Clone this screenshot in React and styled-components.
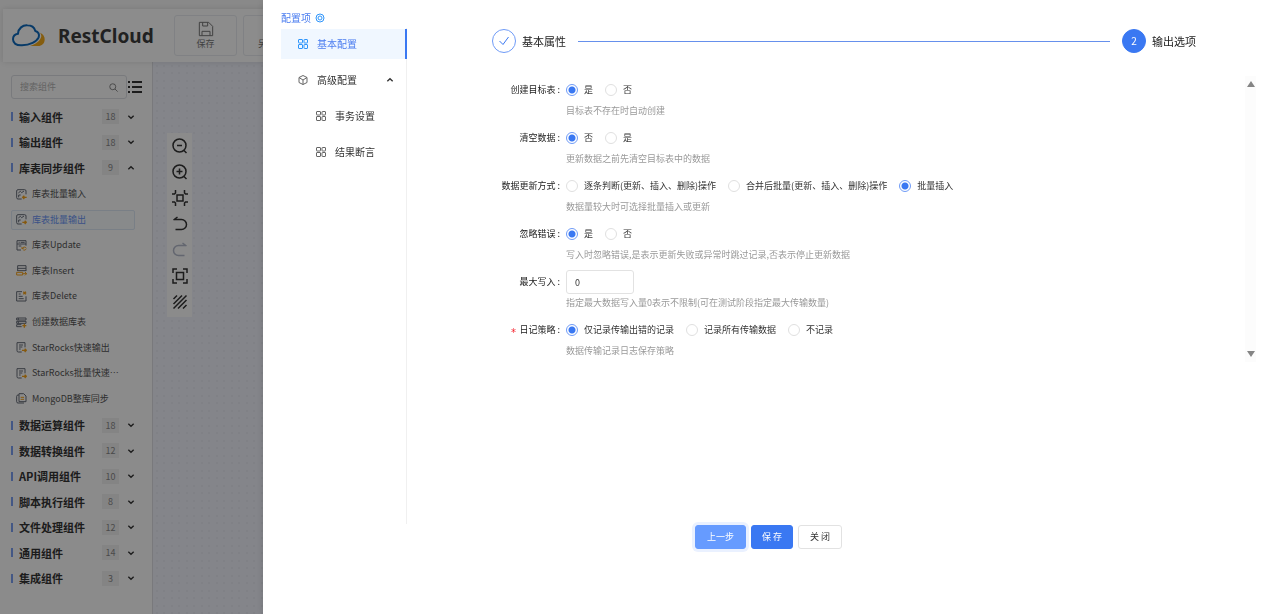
import React, { useState } from "react";
import styled, { createGlobalStyle, css } from "styled-components";

const blue = "#3a78f2";
const ink = "#333";

const GlobalStyle = createGlobalStyle`
  *, *::before, *::after { box-sizing: border-box; }
  body {
    margin: 0;
    background: #fafafa;
    color: ${ink};
    font-family: "Noto Sans CJK SC", "Noto Sans", sans-serif;
    font-size: 9px;
    line-height: 16px;
  }
  button, input { font: inherit; color: inherit; }
  ul { list-style: none; margin: 0; padding: 0; }
`;

/* ---------- page behind the drawer ---------- */

const Page = styled.div`
  display: flex;
  flex-direction: column;
  min-height: 100vh;
  overflow: hidden;
`;

const Header = styled.header`
  display: flex;
  align-items: center;
  gap: 6px;
  height: 53px;
  margin: 9px 3px 0;
  padding-left: 9px;
  background: #fff;
  box-shadow: 0 0 6px rgba(0, 0, 0, 0.12);
  z-index: 1;
`;

const Brand = styled.div`
  display: flex;
  align-items: center;
  gap: 12px;
  width: 156px;
  color: #3c3c3c;
  font: 700 19px/24px "Noto Sans", sans-serif;
`;

const HeaderButton = styled.button`
  display: flex;
  flex-direction: column;
  align-items: center;
  justify-content: center;
  min-width: 63px;
  height: 41px;
  padding: 0 14px;
  border: 1px solid #e9ebf1;
  border-radius: 3px;
  background: #fff;
  color: #777;
  line-height: 13px;
`;

const Workspace = styled.div`
  display: flex;
  flex: 1;
`;

const Sidebar = styled.aside`
  display: flex;
  flex-direction: column;
  width: 153px;
  padding: 13px 17px 23px 11px;
  border-right: 1px solid #dcdde2;
  background: #fdfdfd;
`;

const SearchRow = styled.div`
  display: flex;
  align-items: center;
  width: 132px;
  height: 24px;
  margin-bottom: 5px;
`;

const SearchBox = styled.label`
  display: flex;
  align-items: center;
  width: 116px;
  height: 24px;
  padding: 0 8px;
  border: 1px solid #dcdee4;
  border-radius: 3px;
  color: #666;
`;

const SearchInput = styled.input`
  flex: 1;
  min-width: 0;
  padding: 0;
  border: 0;
  outline: 0;
  background: transparent;
  &::placeholder { color: #b4b4b4; opacity: 1; }
`;

const IconButton = styled.button`
  display: flex;
  align-items: center;
  justify-content: center;
  padding: 0;
  border: 0;
  background: transparent;
  color: ${(p) => (p.$faded ? "#b4bacb" : ink)};
`;

const Tree = styled.ul`
  display: flex;
  flex: 1;
  flex-direction: column;
`;

const Group = styled.li`
  display: flex;
  flex: 1 0 auto;
  flex-direction: column;
`;

const GroupHead = styled.button`
  display: flex;
  flex: 1 0 25px;
  align-items: center;
  padding: 0;
  border: 0;
  background: transparent;
  color: ${ink};
  font-weight: 700;
  text-align: left;
  &::before {
    content: "";
    width: 2px;
    height: 9px;
    margin-right: 6px;
    background: #7b9ef2;
  }
`;

const GroupName = styled.span`
  flex: 1;
  font-size: 11px;
`;

const Count = styled.span`
  width: 17px;
  margin-right: 8px;
  background: #f1f1f1;
  color: #888;
  font-weight: 400;
  line-height: 15px;
  text-align: center;
`;

const ItemList = styled.ul`
  display: grid;
  grid-auto-rows: 1fr;
  align-items: center;
  height: 232px;
  padding: 1px 0;
`;

const Item = styled.li`
  display: flex;
  align-items: center;
  gap: 5px;
  height: 20px;
  padding-left: 4px;
  border: 1px solid ${(p) => (p.$active ? "#dce8f5" : "transparent")};
  border-radius: 2px;
  background: ${(p) => (p.$active ? "#f8fbfe" : "transparent")};
  color: ${(p) => (p.$active ? "#6b96f5" : "#555")};
  white-space: nowrap;
`;

const Canvas = styled.main`
  flex: 1;
  padding: 71px 14px;
  background-color: #f0f2fb;
  background-image:
    radial-gradient(circle at 4px 4px, #e9ebf4 1px, transparent 1px),
    radial-gradient(circle at 11px 4px, #e9ebf4 1px, transparent 1px),
    radial-gradient(circle at 4px 11px, #e9ebf4 1px, transparent 1px),
    radial-gradient(circle at 11px 11px, #e9ebf4 1px, transparent 1px);
  background-size: 15px 15px;
`;

const CanvasTools = styled.div`
  display: grid;
  grid-auto-rows: 26px;
  width: 25px;
  padding: 0 0 2px;
  background: #fdfdfd;
`;

/* ---------- drawer ---------- */

const Mask = styled.div`
  position: fixed;
  inset: 0;
  z-index: 10;
  background: rgba(0, 0, 0, 0.45);
`;

const Drawer = styled.section`
  position: fixed;
  inset: 0 0 0 263px;
  z-index: 11;
  display: flex;
  flex-direction: column;
  padding: 0 10px 0 18px;
  background: #fff;
  box-shadow: -2px 0 6px rgba(0, 0, 0, 0.08);
`;

const DrawerTitle = styled.h1`
  display: flex;
  align-items: center;
  gap: 4px;
  height: 28px;
  margin: 0;
  padding-top: 8px;
  color: #4b7df0;
  font-size: 10px;
  font-weight: 400;
`;

const DrawerBody = styled.div`
  display: flex;
  flex: 1;
  min-height: 0;
`;

const Menu = styled.nav`
  display: flex;
  flex-direction: column;
  gap: 6px;
  width: 126px;
  padding-top: 1px;
  border-right: 1px solid #f0f0f0;
`;

const MenuItem = styled.a`
  display: flex;
  align-items: center;
  gap: 9px;
  height: 30px;
  margin-right: -1px;
  padding: 0 11px 0 ${(p) => (p.$nested ? 35 : 17)}px;
  border-right: 2px solid ${(p) => (p.$active ? blue : "transparent")};
  background: ${(p) => (p.$active ? "#f0f7ff" : "transparent")};
  color: ${(p) => (p.$active ? "#4b7df0" : ink)};
  font-size: 10px;
  text-decoration: none;
  > span { flex: 1; }
  > svg:first-child { color: ${(p) => (p.$active ? "#2f95fb" : "#666")}; }
`;

const Content = styled.div`
  display: flex;
  flex: 1;
  flex-direction: column;
  min-width: 0;
`;

const Steps = styled.ol`
  display: flex;
  align-items: center;
  gap: 12px;
  margin: 1px 60px 23px 85px;
  padding: 0;
  list-style: none;
`;

const Step = styled.li`
  display: flex;
  align-items: center;
  gap: 6px;
  font-size: 11px;
  color: #222;
`;

const StepMark = styled.span`
  display: flex;
  align-items: center;
  justify-content: center;
  width: 24px;
  height: 24px;
  border: 1px solid ${(p) => (p.$current ? blue : "#6f9bf7")};
  border-radius: 50%;
  background: ${(p) => (p.$current ? blue : "#fff")};
  color: ${(p) => (p.$current ? "#fff" : blue)};
  font-size: 10px;
`;

const StepLine = styled.li`
  flex: 1;
  height: 1px;
  background: #6690ec;
`;

const FormScroll = styled.div`
  display: flex;
  height: 286px;
`;

const Form = styled.form`
  display: grid;
  grid-auto-rows: 48px;
  flex: 1;
  align-content: start;
`;

const ScrollTrack = styled.div`
  display: flex;
  flex-direction: column;
  align-items: center;
  justify-content: space-between;
  width: 11px;
  padding: 5px 0;
  background: #fcfcfc;
  color: #858585;
`;

const Field = styled.div`
  display: grid;
  grid-template-columns: 159px 1fr;
  grid-template-rows: 28px 14px;
`;

const FieldLabel = styled.label`
  align-self: center;
  padding-right: 6px;
  color: #222;
  text-align: right;
  &::after { content: ":"; margin-left: 2px; }
  ${(p) =>
    p.$required &&
    css`
      &::before {
        content: "*";
        margin-right: 3px;
        color: #f5222d;
        font: 10px/1 "DejaVu Sans Mono", monospace;
        vertical-align: bottom;
      }
    `}
`;

const Control = styled.div`
  display: flex;
  align-items: center;
  gap: 12px;
`;

const Hint = styled.div`
  grid-column: 2;
  color: #999;
  line-height: 14px;
`;

const RadioLabel = styled.label`
  display: flex;
  align-items: center;
  gap: 6px;
  white-space: nowrap;
`;

const Radio = styled.input`
  appearance: none;
  width: 12px;
  height: 12px;
  margin: 0;
  border: 1px solid #e0e0e0;
  border-radius: 50%;
  background: #fff;
  &:checked {
    border-color: #6f9bf7;
    background: radial-gradient(circle, ${blue} 3px, #fff 4px);
  }
`;

const NumberInput = styled.input`
  width: 68px;
  height: 24px;
  padding: 0 8px;
  border: 1px solid #e2e2e2;
  border-radius: 3px;
`;

const Footer = styled.footer`
  display: flex;
  justify-content: center;
  gap: 5px;
  height: 90px;
  padding-top: 1px;
`;

const variants = {
  previous: css`
    border-color: #669bff;
    background: #669bff;
    color: #fff;
    box-shadow: 0 0 0 3px #eaf1ff;
  `,
  primary: css`
    padding: 0 10px;
    border-color: ${blue};
    background: ${blue};
    color: #fff;
  `,
  plain: css`
    border-color: #e2e2e2;
    background: #fff;
  `,
};

const Button = styled.button`
  height: 24px;
  padding: 0 11px;
  border: 1px solid;
  border-radius: 3px;
  ${(p) => variants[p.$variant]}
`;

/* ---------- icons ---------- */

function Icon({ size = 12, box = 24, width = 2, children }) {
  return (
    <svg
      width={size}
      height={size}
      viewBox={`0 0 ${box} ${box}`}
      fill="none"
      stroke="currentColor"
      strokeWidth={width}
      aria-hidden="true"
    >
      {children}
    </svg>
  );
}

const Chevron = ({ up }) => (
  <Icon size={8} width={4}>
    <path d={up ? "M4 16l8-8 8 8" : "M4 8l8 8 8-8"} />
  </Icon>
);

const GridIcon = () => (
  <Icon size={10} box={20} width={2}>
    <rect x="1" y="1" width="8" height="7" rx="1" />
    <rect x="12" y="1" width="7" height="7" rx="1" />
    <rect x="1" y="11" width="8" height="8" rx="1" />
    <rect x="12" y="11" width="7" height="8" rx="1" />
  </Icon>
);

const CubeIcon = () => (
  <Icon size={10} box={20} width={2}>
    <path d="M10 1l8 4v10l-8 4-8-4V5z M2 5l8 5 8-5 M10 10v9" />
  </Icon>
);

const Logo = () => (
  <svg width="34" height="23" viewBox="0 0 102 69" aria-hidden="true">
    <path
      fill="#f2a91c"
      d="M84 26C94 30 99 38 98 48C97 59 90 66 78 66H54C72 61 86 49 88 37C88 33 86 29 84 26z"
    />
    <path
      fill="none"
      stroke="#0f6bbd"
      strokeWidth="6"
      d="M30 64C12 65 3 57 3 46C3 36 10 30 18 29C19 13 32 3 46 4C59 4 67 11 70 21C79 23 83 31 80 40C74 53 54 63 30 64z"
    />
  </svg>
);

const SaveIcon = () => (
  <Icon size={16} box={48} width={3}>
    <path d="M4 4h28l12 12v28H4z M14 4v11h15V4 M12 44V31h24v13" />
  </Icon>
);

const accent = "#f5a21b";

const itemIcons = {
  input: (
    <>
      <path d="M17 30H6a4 4 0 0 1-4-4V6a4 4 0 0 1 4-4h20a4 4 0 0 1 4 4v10 M7 12l6-5 4 4 7-5 M8 18v7 M8 18h6" />
      <path stroke={accent} strokeWidth="4" d="M32 25H20 M25 20l-5 5 5 5" />
    </>
  ),
  output: (
    <>
      <path d="M17 30H6a4 4 0 0 1-4-4V6a4 4 0 0 1 4-4h20a4 4 0 0 1 4 4v10 M7 12l6-5 4 4 7-5 M8 18v7 M8 18h6" />
      <path stroke={accent} strokeWidth="4" d="M19 25h12 M26 20l5 5-5 5" />
    </>
  ),
  update: (
    <>
      <path d="M15 30H3V2h27v15 M3 12h27 M8 7h3 M14 7h12 M8 18h8" />
      <path stroke={accent} d="M31 25c-2-4-7-5-10-2l-3 3 M18 21v5h5 M22 30c3 1 7 0 8-3" />
    </>
  ),
  insert: (
    <>
      <path d="M5 18V2h25v16 M5 10h25 M5 17h25" />
      <path stroke={accent} d="M2 22h18v8H2z M21 26h11 M27 21l5 5-5 5" />
    </>
  ),
  remove: (
    <>
      <path d="M18 2H2v28h28V16 M8 9h6 M8 16h12 M8 23h15" />
      <path stroke={accent} strokeWidth="4" d="M22 2l8 8 M30 2l-8 8" />
    </>
  ),
  create: (
    <>
      <path d="M2 3h28v6H2z M2 13h28v6H2z M17 29H2v-6h14 M7 3v6 M7 13v6" />
      <path stroke={accent} strokeWidth="4" d="M25 20v12 M19 26h12" />
    </>
  ),
  fast: (
    <>
      <path d="M17 30H7a4 4 0 0 1-4-4V2h24v14 M9 9h12 M9 15h10 M9 21h5" />
      <path stroke={accent} strokeWidth="4" d="M18 25h13 M26 20l5 5-5 5" />
    </>
  ),
  mongo: (
    <>
      <path d="M9 2h14l7 7v17H9z M9 6H6a4 4 0 0 0-4 4v16a4 4 0 0 0 4 4h18" />
      <path stroke={accent} d="M14 13h10 M14 19h10" />
    </>
  ),
};

const toolIcons = [
  ["缩小", <><circle cx="15" cy="15" r="13" /><path d="M10 15h10 M24 25l5 5" /></>],
  ["放大", <><circle cx="15" cy="15" r="13" /><path d="M9 15h12 M15 9v12 M24 25l5 5" /></>],
  ["适应画布", <path d="M10 10h12v12H10z M0 8h5l2-2V0 M25 0v6l2 2h5 M0 24h5l2 2v6 M25 32v-6l2-2h5" />],
  ["撤销", <path d="M4 7h15a10 10 0 0 1 0 20H7 M3 8l8-6" />],
  ["重做", <path d="M28 7H13a10 10 0 0 0 0 20h12 M29 8l-8-6" />],
  ["全屏", <path d="M9 9h14v14H9z M2 10V2h8 M22 2h8v8 M30 22v8h-8 M10 30H2v-8" />],
  ["网格", <path d="M3 10l7-7 M3 20L20 3 M3 29L29 3 M12 29l17-17 M22 29l7-7" />],
];

/* ---------- data ---------- */

const items = [
  ["库表批量输入", "input"],
  ["库表批量输出", "output"],
  ["库表Update", "update"],
  ["库表Insert", "insert"],
  ["库表Delete", "remove"],
  ["创建数据库表", "create"],
  ["StarRocks快速输出", "fast"],
  ["StarRocks批量快速⋯", "fast"],
  ["MongoDB整库同步", "mongo"],
];

const groups = [
  ["输入组件", 18],
  ["输出组件", 18],
  ["库表同步组件", 9, items],
  ["数据运算组件", 18],
  ["数据转换组件", 12],
  ["API调用组件", 10],
  ["脚本执行组件", 8],
  ["文件处理组件", 12],
  ["通用组件", 14],
  ["集成组件", 3],
];

const fields = [
  { id: "create", label: "创建目标表", options: ["是", "否"], value: "是", hint: "目标表不存在时自动创建" },
  { id: "clear", label: "清空数据", options: ["否", "是"], value: "否", hint: "更新数据之前先清空目标表中的数据" },
  {
    id: "mode",
    label: "数据更新方式",
    options: ["逐条判断(更新、插入、删除)操作", "合并后批量(更新、插入、删除)操作", "批量插入"],
    value: "批量插入",
    hint: "数据量较大时可选择批量插入或更新",
  },
  {
    id: "ignore",
    label: "忽略错误",
    options: ["是", "否"],
    value: "是",
    hint: "写入时忽略错误,是表示更新失败或异常时跳过记录,否表示停止更新数据",
  },
  { id: "max", label: "最大写入", value: "0", hint: "指定最大数据写入量0表示不限制(可在测试阶段指定最大传输数量)" },
  {
    id: "log",
    label: "日记策略",
    required: true,
    options: ["仅记录传输出错的记录", "记录所有传输数据", "不记录"],
    value: "仅记录传输出错的记录",
    hint: "数据传输记录日志保存策略",
  },
];

function FormField({ field }) {
  const [value, setValue] = useState(field.value);
  const labelId = `${field.id}-label`;
  return (
    <Field>
      <FieldLabel
        id={labelId}
        as={field.options ? "span" : "label"}
        htmlFor={field.options ? undefined : field.id}
        $required={field.required}
      >
        {field.label}
      </FieldLabel>
      {field.options ? (
        <Control role="radiogroup" aria-labelledby={labelId}>
          {field.options.map((option) => (
            <RadioLabel key={option}>
              <Radio
                type="radio"
                name={field.id}
                checked={value === option}
                onChange={() => setValue(option)}
              />
              {option}
            </RadioLabel>
          ))}
        </Control>
      ) : (
        <Control>
          <NumberInput id={field.id} value={value} onChange={(e) => setValue(e.target.value)} />
        </Control>
      )}
      <Hint>{field.hint}</Hint>
    </Field>
  );
}

export default function App() {
  return (
    <>
      <GlobalStyle />
      <Page>
        <Header>
          <Brand>
            <Logo />
            RestCloud
          </Brand>
          <HeaderButton type="button">
            <SaveIcon />
            保存
          </HeaderButton>
          <HeaderButton type="button">
            <SaveIcon />
            另存版本
          </HeaderButton>
        </Header>
        <Workspace>
          <Sidebar>
            <SearchRow>
              <SearchBox>
                <SearchInput placeholder="搜索组件" aria-label="搜索组件" />
                <Icon size={9}>
                  <circle cx="10" cy="10" r="8" />
                  <path d="M16 16l7 7" />
                </Icon>
              </SearchBox>
              <IconButton type="button" aria-label="列表">
                <Icon size={16} box={16}>
                  <path d="M1 3h2 M5 3h10 M1 8h2 M5 8h10 M1 13h2 M5 13h10" />
                </Icon>
              </IconButton>
            </SearchRow>
            <Tree>
              {groups.map(([name, count, children]) => (
                <Group key={name}>
                  <GroupHead type="button">
                    <GroupName>{name}</GroupName>
                    <Count>{count}</Count>
                    <Chevron up={Boolean(children)} />
                  </GroupHead>
                  {children && (
                    <ItemList>
                      {children.map(([label, icon]) => (
                        <Item key={label} $active={icon === "output"}>
                          <Icon size={11} box={33} width={3}>
                            <g stroke="#666c78">{itemIcons[icon]}</g>
                          </Icon>
                          {label}
                        </Item>
                      ))}
                    </ItemList>
                  )}
                </Group>
              ))}
            </Tree>
          </Sidebar>
          <Canvas>
            <CanvasTools>
              {toolIcons.map(([name, shape]) => (
                <IconButton key={name} type="button" aria-label={name} $faded={name === "重做"}>
                  <Icon size={16} box={32} width={3}>
                    {shape}
                  </Icon>
                </IconButton>
              ))}
            </CanvasTools>
          </Canvas>
        </Workspace>
      </Page>

      <Mask />
      <Drawer role="dialog" aria-label="配置项">
        <DrawerTitle>
          配置项
          <Icon size={10} box={20}>
            <circle cx="10" cy="10" r="8" stroke="#2f95fb" />
            <circle cx="10" cy="10" r="4" stroke="#2f95fb" />
          </Icon>
        </DrawerTitle>
        <DrawerBody>
          <Menu>
            <MenuItem href="#basic" $active>
              <GridIcon />
              <span>基本配置</span>
            </MenuItem>
            <MenuItem href="#advanced">
              <CubeIcon />
              <span>高级配置</span>
              <Chevron up />
            </MenuItem>
            <MenuItem href="#transaction" $nested>
              <GridIcon />
              <span>事务设置</span>
            </MenuItem>
            <MenuItem href="#assertion" $nested>
              <GridIcon />
              <span>结果断言</span>
            </MenuItem>
          </Menu>
          <Content>
            <Steps>
              <Step>
                <StepMark>
                  <Icon size={12} width={2}>
                    <path d="M3 12l7 7L21 4" />
                  </Icon>
                </StepMark>
                基本属性
              </Step>
              <StepLine aria-hidden="true" />
              <Step>
                <StepMark $current>2</StepMark>
                输出选项
              </Step>
            </Steps>
            <FormScroll>
              <Form>
                {fields.map((field) => (
                  <FormField key={field.id} field={field} />
                ))}
              </Form>
              <ScrollTrack aria-hidden="true">
                <svg width="8" height="6" viewBox="0 0 8 6">
                  <path d="M4 0l4 6H0z" fill="currentColor" />
                </svg>
                <svg width="8" height="6" viewBox="0 0 8 6">
                  <path d="M4 6l4-6H0z" fill="currentColor" />
                </svg>
              </ScrollTrack>
            </FormScroll>
          </Content>
        </DrawerBody>
        <Footer>
          <Button type="button" $variant="previous">上一步</Button>
          <Button type="button" $variant="primary">保 存</Button>
          <Button type="button" $variant="plain">关 闭</Button>
        </Footer>
      </Drawer>
    </>
  );
}
